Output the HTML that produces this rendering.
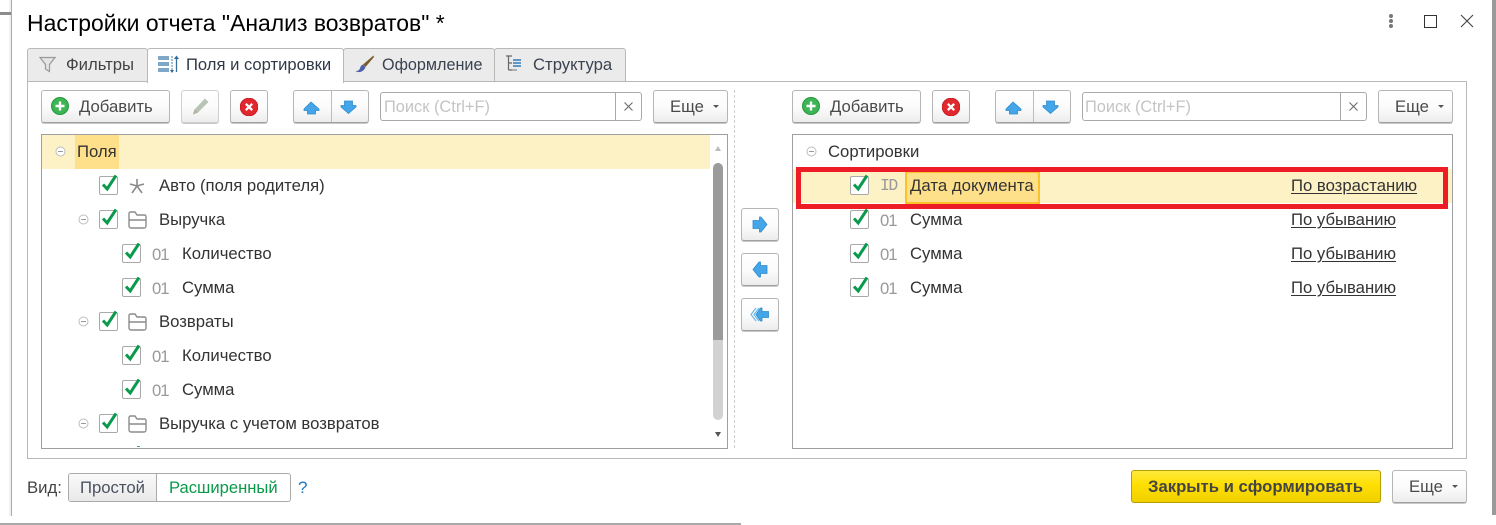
<!DOCTYPE html>
<html lang="ru"><head><meta charset="utf-8"><title>Настройки отчета</title>
<style>
html,body{margin:0;padding:0;background:#fff}
#p{position:relative;width:1496px;height:525px;overflow:hidden;background:#fff;font:16.7px/20px "Liberation Sans",Arial,sans-serif;color:#333}
#p div,#p span.t,#p svg{position:absolute}
.t{white-space:nowrap;position:absolute;margin-top:1px}
.b{box-sizing:border-box;border:1px solid #b5b5b5;border-bottom-color:#a0a0a0;border-radius:3px;background:linear-gradient(#fff 0%,#fbfbfb 55%,#ececec 100%);box-shadow:0 1px 0 #c8c8c8}
.tab{box-sizing:border-box;border:1px solid #b8b8b8;border-radius:3px 3px 0 0;background:#ebebeb;top:48px;height:34px}
.lst{box-sizing:border-box;border:1px solid #9f9f9f;background:#fff}
.s{box-sizing:border-box;border:1px solid #aaa;border-radius:3px;background:#fff}
.g{color:#999;font-size:16.7px;letter-spacing:-1px}
.d{color:#4a4a4a}
.u{text-decoration:underline;text-underline-offset:2px}
.ph{color:#c4c4c4;font-size:16.4px}
</style></head><body>
<div id="p">
<svg width="0" height="0" style="position:absolute"><defs>
<g id="ck"><rect x=".5" y="4.500" width="18" height="18" rx="1.500" fill="#fff" stroke="#a9a9a9"/><path d="M4 12.500l4.200 4.500L17 3.500" fill="none" stroke="#0b9a4d" stroke-width="3"/></g>
<g id="fo"><path d="M1 7V3.500A1.500 1.500 0 0 1 2.500 2H7l2 3h7.500A1.500 1.500 0 0 1 18 6.500V16a2 2 0 0 1-2 2H3a2 2 0 0 1-2-2V7zM1 10h17" fill="none" stroke="#8c8c8c" stroke-width="1.400"/></g>
<g id="mi"><circle cx="5.500" cy="5.500" r="4.500" fill="#fff" stroke="#bdbdbd"/><path d="M3 5.500h5" stroke="#999"/></g>
<g id="pl"><circle cx="9" cy="9" r="8.500" fill="#3fb455" stroke="#1f9a3c"/><path d="M9 4.500v9M4.500 9h9" stroke="#fff" stroke-width="2.400"/></g>
<g id="xx"><circle cx="9" cy="9" r="8.800" fill="#e0282e" stroke="#c81e24"/><path d="M5.800 5.800l6.400 6.400M12.200 5.800l-6.400 6.400" stroke="#fff" stroke-width="2.200"/></g>
<g id="up"><path d="M8 2L16 9V10.500H12.500V14H4.500V10.500H1V9z" fill="#44a5e8" stroke="#2f8ccc" stroke-width=".8"/></g>
<g id="dn"><path d="M4.500 2H12.500V6.500H16V8L8.500 14.500 1 8V6.500H4.500z" fill="#44a5e8" stroke="#2f8ccc" stroke-width=".8"/></g>
</defs></svg>

<!-- window chrome -->
<div style="left:9px;top:0;width:2px;height:516px;background:#f1f1f1"></div>
<div style="left:0;top:12px;width:11px;height:3px;background:#8c8c8c"></div>
<div style="left:11px;top:0;width:1px;height:516px;background:#aaa"></div>
<div style="left:1492px;top:0;width:4px;height:515px;background:#9a9a9a"></div>
<div style="left:0;top:523px;width:741px;height:2px;background:#a9a9a9"></div>

<span class="t" style="left:27px;top:8px;font-size:22.950px;line-height:28px;color:#000">Настройки отчета "Анализ возвратов" *</span>

<!-- window buttons -->
<div style="left:1389px;top:14px;width:4px;height:4px;border-radius:2px;background:#777"></div>
<div style="left:1389px;top:19px;width:4px;height:4px;border-radius:2px;background:#777"></div>
<div style="left:1389px;top:24px;width:4px;height:4px;border-radius:2px;background:#777"></div>
<div style="left:1424px;top:15px;width:11px;height:11px;box-sizing:content-box;border:1px solid #333"></div>
<svg style="left:1460px;top:14px" width="14" height="14"><path d="M1 1l12 12M13 1L1 13" stroke="#444" stroke-width="1.100"/></svg>

<!-- panel -->
<div style="left:27px;top:81px;width:1440px;height:378px;box-sizing:border-box;border:1px solid #b8b8b8;background:#fff"></div>

<!-- tabs -->
<div class="tab" style="left:27px;width:121px"></div>
<div class="tab" style="left:343px;width:152px"></div>
<div class="tab" style="left:494px;width:132px"></div>
<div class="tab" style="left:147px;width:197px;height:35px;background:#fff;border-bottom:0"></div>
<svg style="left:39px;top:56px" width="17" height="17"><path d="M1 1.500h15L10.500 8.500V15.500L6.500 13V8.500z" fill="#e4e4e4" stroke="#9a9a9a" stroke-width="1.200"/></svg>
<span class="t" style="left:66px;top:54px;color:#444">Фильтры</span>
<svg style="left:157px;top:54px" width="22" height="20"><g fill="#7fa8c8"><rect x="1" y="2" width="11" height="4"/><rect x="1" y="8" width="11" height="4"/><rect x="1" y="14" width="11" height="4"/></g><path d="M15 2v16" stroke="#a9bfd2" stroke-width="2" stroke-dasharray="2 1"/><path d="M19.500 3v15" stroke="#3b6e9a" stroke-width="1.300"/><path d="M17 5l2.500-3.500L22 5zM13 16h4l-2 3z" fill="#2f6a9c"/></svg>
<span class="t" style="left:186px;top:54px;color:#2f3a48;font-size:16.600px">Поля и сортировки</span>
<svg style="left:354px;top:54px" width="21" height="20"><path d="M19.500 1.500L9 10.500l2.500 2.500L20 3z" fill="#7a5a2c"/><path d="M9 10.500c-3 1-2.500 4-4 5.500-.8.800-2.500 1-3.500 1 2.500 2 7.500 1.500 10-3.500z" fill="#4c5fa8"/></svg>
<span class="t" style="left:382px;top:54px;color:#3b4250;font-size:16.200px">Оформление</span>
<svg style="left:505px;top:54px" width="18" height="20"><path d="M1 2h6M3.500 2v14M3.500 9H7M3.500 16H7" stroke="#666" stroke-width="1.200" fill="none"/><path d="M8 6h8M8 9h8M8 12h8" stroke="#4a8cc4" stroke-width="1.800"/><path d="M7 16h5" stroke="#888" stroke-width="1.200"/></svg>
<span class="t" style="left:533px;top:54px;color:#3b4250">Структура</span>

<!-- left toolbar -->
<div class="b" style="left:41px;top:90px;width:129px;height:33px"></div>
<svg style="left:51px;top:97px" width="18" height="18"><use href="#pl"/></svg>
<span class="t d" style="left:79px;top:96px">Добавить</span>
<div class="b" style="left:181px;top:90px;width:38px;height:33px;border-color:#d0d0d0"></div>
<svg style="left:191px;top:97px" width="19" height="19"><path d="M14 1.500L17.500 5 7 15.500l-5 2 1.500-5z" fill="#b7c4b6"/><path d="M2 17.500l1.500-5 3.500 3z" fill="#b5b09f"/></svg>
<div class="b" style="left:230px;top:90px;width:38px;height:33px"></div>
<svg style="left:240px;top:98px" width="18" height="18"><use href="#xx"/></svg>
<div class="b" style="left:293px;top:90px;width:76px;height:33px"></div>
<div style="left:331px;top:91px;width:1px;height:31px;background:#bcbcbc"></div>
<svg style="left:303px;top:100px" width="17" height="15"><use href="#up"/></svg>
<svg style="left:340px;top:99px" width="17" height="16"><use href="#dn"/></svg>
<div class="s" style="left:380px;top:92px;width:262px;height:29px"></div>
<div style="left:615px;top:93px;width:1px;height:27px;background:#aaa"></div>
<span class="t ph" style="left:384px;top:96px">Поиск (Ctrl+F)</span>
<svg style="left:624px;top:102px" width="9" height="9"><path d="M.5.500l8 8M8.500.500l-8 8" stroke="#666"/></svg>
<div class="b" style="left:653px;top:90px;width:75px;height:33px"></div>
<span class="t d" style="left:670px;top:96px">Еще</span>
<div style="left:713px;top:105px;width:0;height:0;border:3px solid transparent;border-top:3px solid #555;border-bottom:0"></div>

<!-- left list -->
<div class="lst" style="left:41px;top:134px;width:687px;height:315px"></div>
<div style="left:42px;top:135px;width:668px;height:34px;background:#fdf2c5"></div>
<div style="left:75px;top:135px;width:44px;height:34px;background:#ffe08a"></div>
<div style="left:713px;top:163px;width:10px;height:257px;border-radius:5px;background:#d2d2d2"></div>
<div style="left:713px;top:163px;width:10px;height:177px;border-radius:5px 5px 0 0;background:#9b9b9b"></div>
<div style="left:715px;top:146px;width:0;height:0;border:3px solid transparent;border-bottom:5px solid #bbb;border-top:0"></div>
<div style="left:715px;top:432px;width:0;height:0;border:3px solid transparent;border-top:5px solid #555;border-bottom:0"></div>

<svg style="left:55px;top:146px" width="11" height="11"><use href="#mi"/></svg>
<span class="t" style="left:77px;top:141px">Поля</span>

<svg style="left:99px;top:172px" width="20" height="26"><use href="#ck"/></svg>
<svg style="left:129px;top:178px" width="16" height="17"><path d="M8 8V1M8 8L1 6M8 8L15 6M8 8L3 15M8 8L13 15" stroke="#8a8a8a" stroke-width="1.600" fill="none"/></svg>
<span class="t" style="left:159px;top:175px">Авто (поля родителя)</span>

<svg style="left:78px;top:214px" width="11" height="11"><use href="#mi"/></svg>
<svg style="left:99px;top:206px" width="20" height="26"><use href="#ck"/></svg>
<svg style="left:128px;top:210px" width="20" height="20"><use href="#fo"/></svg>
<span class="t" style="left:159px;top:209px">Выручка</span>

<svg style="left:122px;top:240px" width="20" height="26"><use href="#ck"/></svg>
<span class="t g" style="left:152px;top:244px">01</span>
<span class="t" style="left:182px;top:243px">Количество</span>

<svg style="left:122px;top:274px" width="20" height="26"><use href="#ck"/></svg>
<span class="t g" style="left:152px;top:278px">01</span>
<span class="t" style="left:182px;top:277px">Сумма</span>

<svg style="left:78px;top:316px" width="11" height="11"><use href="#mi"/></svg>
<svg style="left:99px;top:308px" width="20" height="26"><use href="#ck"/></svg>
<svg style="left:128px;top:312px" width="20" height="20"><use href="#fo"/></svg>
<span class="t" style="left:159px;top:311px">Возвраты</span>

<svg style="left:122px;top:342px" width="20" height="26"><use href="#ck"/></svg>
<span class="t g" style="left:152px;top:346px">01</span>
<span class="t" style="left:182px;top:345px">Количество</span>

<svg style="left:122px;top:376px" width="20" height="26"><use href="#ck"/></svg>
<span class="t g" style="left:152px;top:380px">01</span>
<span class="t" style="left:182px;top:379px">Сумма</span>

<svg style="left:78px;top:418px" width="11" height="11"><use href="#mi"/></svg>
<svg style="left:99px;top:410px" width="20" height="26"><use href="#ck"/></svg>
<svg style="left:128px;top:414px" width="20" height="20"><use href="#fo"/></svg>
<span class="t" style="left:159px;top:413px">Выручка с учетом возвратов</span>
<div style="left:137px;top:446px;width:3px;height:1px;background:#4aa870"></div>

<!-- divider -->
<div style="left:734px;top:90px;height:358px;width:0;border-left:1px dashed #cfcfcf"></div>

<!-- middle buttons -->
<div class="b" style="left:741px;top:208px;width:38px;height:33px"></div>
<svg style="left:752px;top:216px" width="16" height="17"><path d="M1 4.500h6.500V1h1.500L15 8.500 9 16H7.500V12.500H1z" fill="#44a5e8" stroke="#2f8ccc" stroke-width=".8"/></svg>
<div class="b" style="left:741px;top:253px;width:38px;height:33px"></div>
<svg style="left:752px;top:261px" width="16" height="17"><path d="M15 4.500H8.500V1H7L1 8.500 7 16h1.500V12.500H15z" fill="#44a5e8" stroke="#2f8ccc" stroke-width=".8"/></svg>
<div class="b" style="left:741px;top:298px;width:38px;height:33px"></div>
<svg style="left:750px;top:307px" width="20" height="15"><path d="M6 1L1 7.500 6 14M9 1L4 7.500 9 14" fill="none" stroke="#6fb6e6" stroke-width="1.200"/><path d="M18.500 4.500H12V1h-1.500L6 7.500 10.500 14H12v-3.500h6.500z" fill="#44a5e8" stroke="#2f8ccc" stroke-width=".8"/></svg>

<!-- right toolbar -->
<div class="b" style="left:792px;top:90px;width:129px;height:33px"></div>
<svg style="left:802px;top:97px" width="18" height="18"><use href="#pl"/></svg>
<span class="t d" style="left:830px;top:96px">Добавить</span>
<div class="b" style="left:932px;top:90px;width:38px;height:33px"></div>
<svg style="left:942px;top:98px" width="18" height="18"><use href="#xx"/></svg>
<div class="b" style="left:995px;top:90px;width:76px;height:33px"></div>
<div style="left:1033px;top:91px;width:1px;height:31px;background:#bcbcbc"></div>
<svg style="left:1005px;top:100px" width="17" height="15"><use href="#up"/></svg>
<svg style="left:1042px;top:99px" width="17" height="16"><use href="#dn"/></svg>
<div class="s" style="left:1082px;top:92px;width:285px;height:29px"></div>
<div style="left:1340px;top:93px;width:1px;height:27px;background:#aaa"></div>
<span class="t ph" style="left:1085px;top:96px">Поиск (Ctrl+F)</span>
<svg style="left:1349px;top:102px" width="9" height="9"><path d="M.5.500l8 8M8.500.500l-8 8" stroke="#666"/></svg>
<div class="b" style="left:1378px;top:90px;width:75px;height:33px"></div>
<span class="t d" style="left:1395px;top:96px">Еще</span>
<div style="left:1438px;top:105px;width:0;height:0;border:3px solid transparent;border-top:3px solid #555;border-bottom:0"></div>

<!-- right list -->
<div class="lst" style="left:792px;top:134px;width:661px;height:315px"></div>
<svg style="left:806px;top:146px" width="11" height="11"><use href="#mi"/></svg>
<span class="t" style="left:828px;top:141px">Сортировки</span>

<div style="left:793px;top:169px;width:659px;height:34px;background:#fdf2c5"></div>
<div style="left:905px;top:171px;width:135px;height:33px;box-sizing:border-box;border:2px solid #fcc22c;background:#ffe08a"></div>
<div style="left:796px;top:167px;width:652px;height:42px;box-sizing:border-box;border:5px solid #ee1c25"></div>
<svg style="left:850px;top:172px" width="20" height="26"><use href="#ck"/></svg>
<span class="t" style="left:880px;top:175px;font-family:'Liberation Mono',monospace;font-size:16.500px;color:#999;letter-spacing:-1.500px">ID</span>
<span class="t" style="left:910px;top:175px;font-size:16.800px">Дата документа</span>
<span class="t u" style="left:1291px;top:175px">По возрастанию</span>

<svg style="left:850px;top:206px" width="20" height="26"><use href="#ck"/></svg>
<span class="t g" style="left:880px;top:210px">01</span>
<span class="t" style="left:910px;top:209px">Сумма</span>
<span class="t u" style="left:1291px;top:209px">По убыванию</span>

<svg style="left:850px;top:240px" width="20" height="26"><use href="#ck"/></svg>
<span class="t g" style="left:880px;top:244px">01</span>
<span class="t" style="left:910px;top:243px">Сумма</span>
<span class="t u" style="left:1291px;top:243px">По убыванию</span>

<svg style="left:850px;top:274px" width="20" height="26"><use href="#ck"/></svg>
<span class="t g" style="left:880px;top:278px">01</span>
<span class="t" style="left:910px;top:277px">Сумма</span>
<span class="t u" style="left:1291px;top:277px">По убыванию</span>

<!-- bottom -->
<span class="t" style="left:27px;top:477px;color:#444">Вид:</span>
<div class="s" style="left:68px;top:473px;width:223px;height:29px;border-color:#aaa"></div>
<div style="left:69px;top:474px;width:87px;height:27px;background:linear-gradient(#fafafa,#e9e9e9);border-right:1px solid #aaa;border-radius:2px 0 0 2px"></div>
<span class="t" style="left:80px;top:477px;color:#4a5260">Простой</span>
<span class="t" style="left:169px;top:477px;color:#0a9a4a;font-size:16.600px">Расширенный</span>
<span class="t" style="left:298px;top:477px;color:#1f78c1;font-size:17px">?</span>
<div style="left:1131px;top:470px;width:250px;height:33px;box-sizing:border-box;border:1px solid #b89f00;border-radius:3px;background:linear-gradient(#ffe93d,#ffdf00 45%,#f0d000)"></div>
<span class="t" style="left:1148px;top:476px;font-weight:bold;color:#444">Закрыть и сформировать</span>
<div class="b" style="left:1392px;top:470px;width:75px;height:33px"></div>
<span class="t d" style="left:1409px;top:476px">Еще</span>
<div style="left:1452px;top:485px;width:0;height:0;border:3px solid transparent;border-top:3px solid #555;border-bottom:0"></div>
</div>
</body></html>
